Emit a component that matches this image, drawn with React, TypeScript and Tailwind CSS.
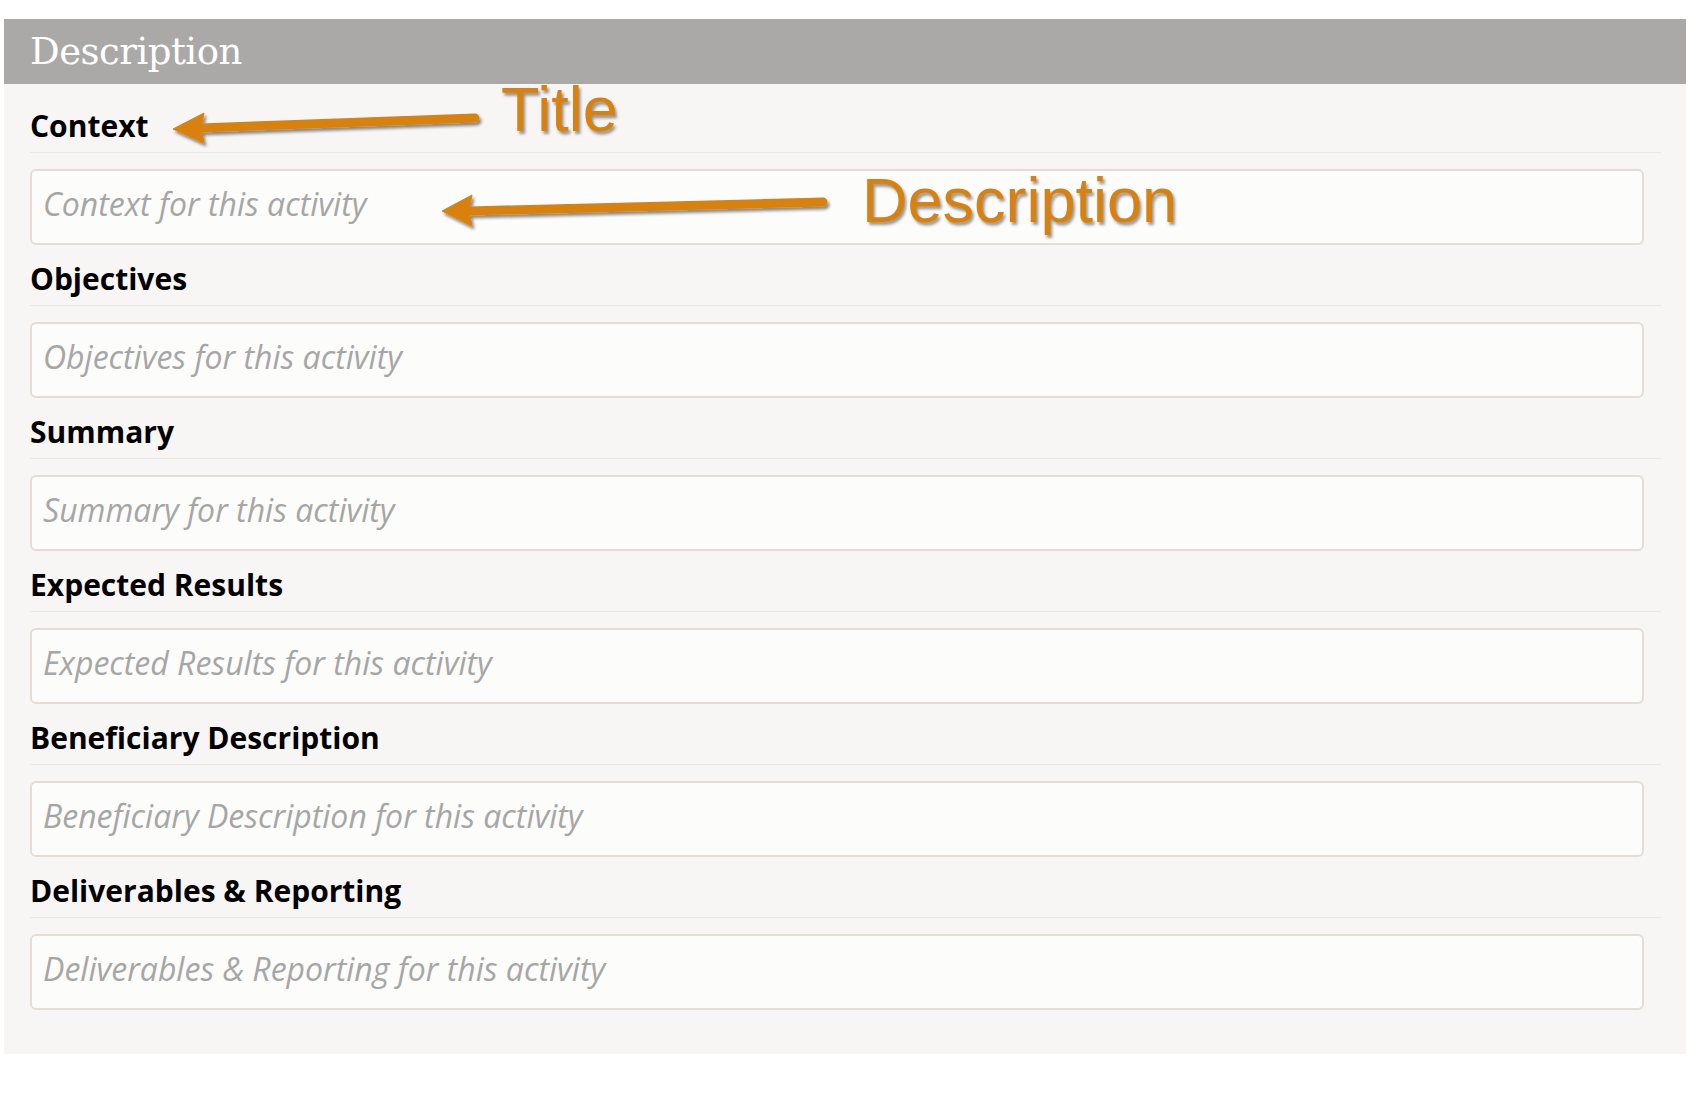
import React from 'react';

const fields = [
  'Context',
  'Objectives',
  'Summary',
  'Expected Results',
  'Beneficiary Description',
  'Deliverables & Reporting',
];

function Arrows() {
  return (
    <svg
      className="absolute left-0 top-0 pointer-events-none"
      width={1692}
      height={1097}
      viewBox="0 0 1692 1097"
    >
      <defs>
        <filter id="arrowShadow" x="-10%" y="-50%" width="120%" height="200%">
          <feDropShadow dx="2" dy="3" stdDeviation="1.6" floodColor="#000" floodOpacity="0.45" />
        </filter>
      </defs>
      <g filter="url(#arrowShadow)" fill="#d9810f" stroke="#d9810f">
        <line x1="475" y1="118" x2="200" y2="128" strokeWidth="9" strokeLinecap="round" />
        <polygon points="173,129 204,113 201,128 204,143" strokeWidth="1" strokeLinejoin="round" />
        <line x1="823" y1="202" x2="468" y2="211" strokeWidth="9" strokeLinecap="round" />
        <polygon points="442,211 472,195 469,211 472,226" strokeWidth="1" strokeLinejoin="round" />
      </g>
    </svg>
  );
}

export default function App() {
  return (
    <div className="relative w-[1692px] h-[1097px] bg-white pt-[19px] pl-[4px] overflow-hidden">
      <div className="w-[1682px] bg-[#f7f6f4] pb-[44px]">
        <div className="h-[65px] bg-[#aaa9a7] pl-[26px] flex items-center">
          <h2 className="text-white text-[37px] leading-none font-['DejaVu_Serif',serif] tracking-[-0.5px]">
            Description
          </h2>
        </div>
        <div className="pt-[24px] pl-[26px] pr-[25px] flex flex-col gap-[16px] font-['Open_Sans',sans-serif]">
          {fields.map((f) => (
            <div key={f}>
              <div className="text-[30px] leading-[36px] font-bold text-black pb-[8px] border-b border-[#ebe8e5]">
                {f}
              </div>
              <input
                type="text"
                placeholder={`${f} for this activity`}
                className="mt-[16px] w-[1614px] h-[76px] rounded-[6px] border-2 border-[#e3ddd6] bg-[#fcfcfa] px-[11px] pb-[7px] text-[32px] italic text-gray-700 outline-none placeholder:text-[#a6a6a6] placeholder:italic"
              />
            </div>
          ))}
        </div>
      </div>
      <Arrows />
      <span className="absolute left-[501px] top-[78px] text-[63px] leading-none text-[#d9810f] font-['Liberation_Sans',Arial,sans-serif] [text-shadow:2px_3px_3px_rgba(0,0,0,0.4)]">
        Title
      </span>
      <span className="absolute left-[862px] top-[169px] text-[63px] leading-none text-[#d9810f] font-['Liberation_Sans',Arial,sans-serif] [text-shadow:2px_3px_3px_rgba(0,0,0,0.4)]">
        Description
      </span>
    </div>
  );
}
